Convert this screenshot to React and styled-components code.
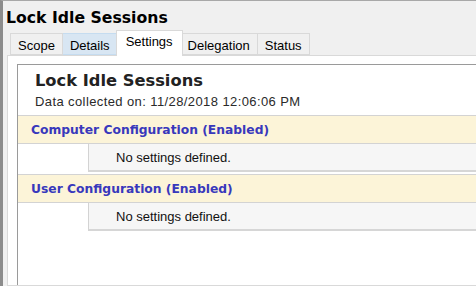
import React from 'react';
import styled, { createGlobalStyle } from 'styled-components';

const GlobalStyle = createGlobalStyle`
  html, body {
    margin: 0;
    padding: 0;
    width: 476px;
    height: 286px;
    overflow: hidden;
    background: #f0f0f0;
  }
`;

const Window = styled.div`
  width: 476px;
  height: 286px;
  box-sizing: border-box;
  background: #f0f0f0;
  border-top: 1px solid #a8a8a8;
  border-left: 3px solid #8c8c8c;
  display: flex;
  flex-direction: column;
  overflow: hidden;
  font-family: "Liberation Sans", Arial, sans-serif;
  color: #000;
`;

const Title = styled.div`
  flex-shrink: 0;
  font-family: "DejaVu Sans", Verdana, sans-serif;
  font-weight: bold;
  font-size: 15.7px;
  line-height: 20px;
  padding: 7px 0 0 3px;
  height: 23px;
  white-space: nowrap;
`;

const TabStrip = styled.div`
  flex-shrink: 0;
  display: flex;
  align-items: flex-end;
  height: 24px;
  padding-left: 7px;
  position: relative;
  z-index: 1;
`;

const Tab = styled.div`
  box-sizing: border-box;
  height: ${p => (p.$active ? '26px' : '22px')};
  padding: ${p => (p.$active ? '3px 9px 0' : '4px 7px 0')};
  margin: ${p => (p.$active ? '0 -2px -1px' : '0')};
  font-size: 13px;
  line-height: 16px;
  white-space: nowrap;
  border: 1px solid ${p => (p.$hover ? '#c5dcf0' : '#d9d9d9')};
  border-bottom: ${p => (p.$active ? 'none' : undefined)};
  border-left: ${p => (p.$first || p.$active ? undefined : 'none')};
  background: ${p => (p.$active ? '#ffffff' : p.$hover ? '#d8e6f3' : '#f0f0f0')};
  position: relative;
  z-index: ${p => (p.$active ? 2 : 1)};
`;

const TabPage = styled.div`
  flex: 1;
  min-height: 0;
  overflow: hidden;
  width: 640px;
  margin-left: 4px;
  background: #ffffff;
  border: 1px solid #d9d9d9;
  padding: 8px 0 0 9px;
`;

const Panel = styled.div`
  height: 400px;
  border-top: 1px solid #9a9a9a;
  border-left: 1px solid #9a9a9a;
  background: #ffffff;
  padding-top: 6px;
`;

const Heading = styled.div`
  font-family: "DejaVu Sans", Verdana, sans-serif;
  font-weight: bold;
  font-size: 16.3px;
  line-height: 20px;
  padding-left: 17px;
  color: #222;
  white-space: nowrap;
`;

const Collected = styled.div`
  font-size: 13px;
  letter-spacing: 0.4px;
  line-height: 16px;
  margin-top: 3px;
  padding-left: 17px;
  color: #2a2a2a;
  white-space: nowrap;
`;

const Sections = styled.div`
  margin-top: 5px;
  display: flex;
  flex-direction: column;
  gap: 2px;
`;

const Band = styled.div`
  height: 27px;
  box-sizing: content-box;
  background: #fcf4d8;
  border-top: 1px solid #d3d3d3;
  border-bottom: 1px solid #d3d3d3;
  padding-left: 13px;
  display: flex;
  align-items: center;
  font-family: "DejaVu Sans", Verdana, sans-serif;
  font-weight: bold;
  font-size: 12.3px;
  color: #3838bc;
  white-space: nowrap;
`;

const SettingRow = styled.div`
  margin-left: 70px;
  height: 28px;
  box-sizing: border-box;
  padding: 6px 0 0 27px;
  background: #f6f6f6;
  border-left: 1px solid #d3d3d3;
  border-bottom: 2px solid #d6d6d6;
  font-size: 13px;
  line-height: 16px;
  color: #111;
  white-space: nowrap;
`;

const tabs = [
  { label: 'Scope' },
  { label: 'Details', hover: true },
  { label: 'Settings', active: true },
  { label: 'Delegation' },
  { label: 'Status' },
];

const sections = ['Computer Configuration (Enabled)', 'User Configuration (Enabled)'];

export default function App() {
  return (
    <>
      <GlobalStyle />
      <Window>
        <Title>Lock Idle Sessions</Title>
        <TabStrip>
          {tabs.map((t, i) => (
            <Tab key={t.label} $first={i === 0} $active={t.active} $hover={t.hover}>
              {t.label}
            </Tab>
          ))}
        </TabStrip>
        <TabPage>
          <Panel>
            <Heading>Lock Idle Sessions</Heading>
            <Collected>Data collected on: 11/28/2018 12:06:06 PM</Collected>
            <Sections>
              {sections.map(s => (
                <div key={s}>
                  <Band>{s}</Band>
                  <SettingRow>No settings defined.</SettingRow>
                </div>
              ))}
            </Sections>
          </Panel>
        </TabPage>
      </Window>
    </>
  );
}
